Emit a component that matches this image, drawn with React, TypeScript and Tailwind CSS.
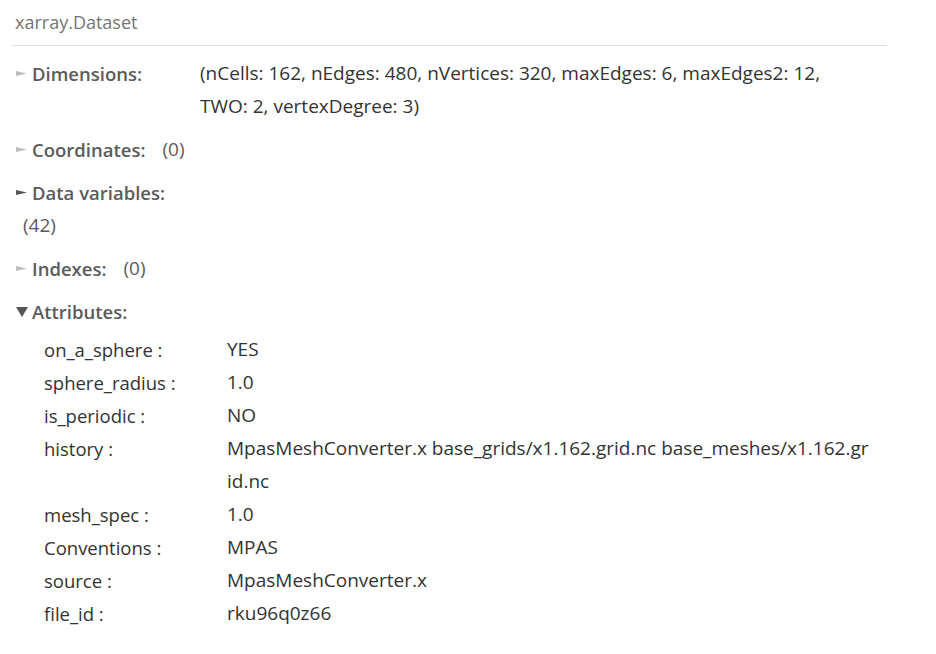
import React from "react";

const dims = "(nCells: 162, nEdges: 480, nVertices: 320, maxEdges: 6, maxEdges2: 12, TWO: 2, vertexDegree: 3)";

const attrs: [string, string][] = [
  ["on_a_sphere :", "YES"],
  ["sphere_radius :", "1.0"],
  ["is_periodic :", "NO"],
  ["history :", "MpasMeshConverter.x base_grids/x1.162.grid.nc base_meshes/x1.162.grid.nc"],
  ["mesh_spec :", "1.0"],
  ["Conventions :", "MPAS"],
  ["source :", "MpasMeshConverter.x"],
  ["file_id :", "rku96q0z66"],
];

function Arrow({ open, dark }: { open?: boolean; dark?: boolean }) {
  const color = dark ? "#555555" : "#bdbdbd";
  return (
    <span className="flex w-[16px] h-[33px] items-center">
      {open ? (
        <svg width="12" height="10" viewBox="0 0 12 10">
          <polygon points="0,0 12,0 6,10" fill={color} />
        </svg>
      ) : (
        <svg width="11" height="5" viewBox="0 0 11 5">
          <polygon points="0,0 11,2.5 0,5" fill={color} />
        </svg>
      )}
    </span>
  );
}

function Label({ label, count, dark, open }: { label: string; count?: string; dark?: boolean; open?: boolean }) {
  return (
    <div className="flex flex-wrap items-start content-start self-start gap-x-[10px] text-[#5b5b5b]">
      <div className="flex h-[33px] items-center">
        <Arrow dark={dark} open={open} />
        <span className="font-semibold text-[18.5px] leading-[33px]">{label}</span>
      </div>
      {count && <span className="h-[33px] pl-[7px] text-[19px] leading-[33px]">{count}</span>}
    </div>
  );
}

function Section({
  label,
  count,
  dark,
  children,
}: {
  label: string;
  count?: string;
  dark?: boolean;
  children?: React.ReactNode;
}) {
  return (
    <div className="grid grid-cols-[184px_1fr] items-start mb-[10px]">
      <Label label={label} count={count} dark={dark} />
      <div className="text-[#333] text-[19px] leading-[33px] pr-[24px]">{children}</div>
    </div>
  );
}

export default function App() {
  return (
    <div
      className="bg-white min-h-[654px] pl-[12px] pt-[8px]"
      style={{ fontFamily: '"Open Sans", "Noto Sans", sans-serif' }}
    >
      <div className="w-[875px]">
        <div className="text-[#757575] text-[18px] leading-[29px] pb-[8px] pl-[3px] border-b border-[#e0e0e0]">
          xarray.Dataset
        </div>
        <div className="pt-[11px] pl-[4px]">
          <Section label="Dimensions:">{dims}</Section>
          <Section label="Coordinates:" count="(0)" />
          <Section label="Data variables:" count="(42)" dark />
          <Section label="Indexes:" count="(0)" />
          <Label label="Attributes:" open dark />
          <div className="grid grid-cols-[183px_1fr] pl-[28px] pt-[5px] text-[#333] leading-[33px]">
            {attrs.map(([k, v]) => (
              <React.Fragment key={k}>
                <div className="text-[18.5px]">{k}</div>
                <div className="break-all pr-[16px] text-[19px]">{v}</div>
              </React.Fragment>
            ))}
          </div>
        </div>
      </div>
    </div>
  );
}
